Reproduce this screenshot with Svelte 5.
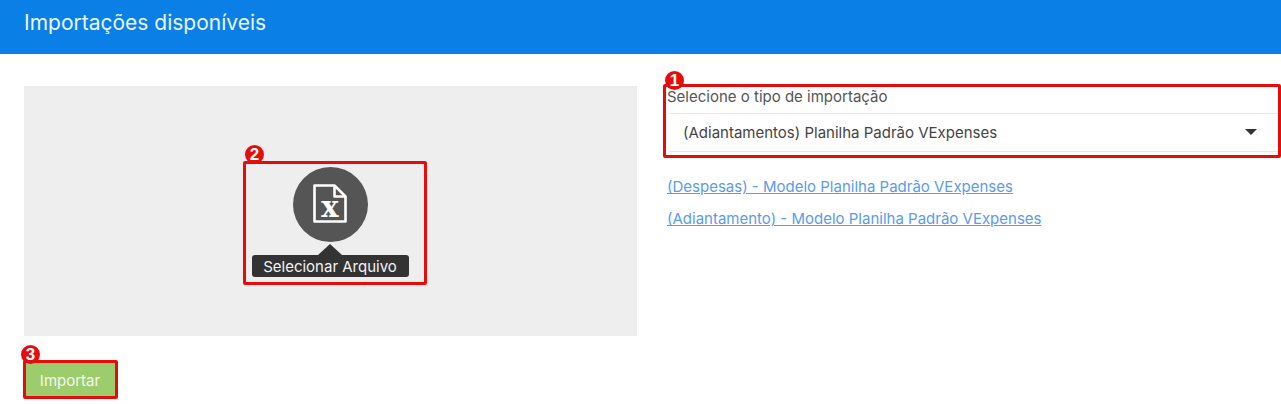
<script>
  const links = [
    '(Despesas) - Modelo Planilha Padrão VExpenses',
    '(Adiantamento) - Modelo Planilha Padrão VExpenses'
  ];
  const marks = [
    { n: 1, cls: 'm1' },
    { n: 2, cls: 'm2' },
    { n: 3, cls: 'm3' }
  ];
</script>

<div class="page">
  <header class="top"><h1>Importações disponíveis</h1></header>
  <main class="content">
    <section class="left">
      <div class="drop">
        <div class="circle">
          <svg class="fileicon" width="34" height="39" viewBox="0 0 34 39" fill="none" aria-hidden="true">
            <path d="M1.5 1.5H21.5L32.5 12.5V37.5H1.5Z" stroke="#fff" stroke-width="2.6" stroke-linejoin="round"/>
            <path d="M21.5 1.5V12.5H32.5" stroke="#fff" stroke-width="2.6" stroke-linejoin="round"/>
            <text x="17" y="33" text-anchor="middle" class="xl">x</text>
          </svg>
        </div>
        <div class="tip">Selecionar Arquivo</div>
      </div>
      <button class="go">Importar</button>
    </section>
    <section class="right">
      <div class="lab">Selecione o tipo de importação</div>
      <div class="select">
        <span>(Adiantamentos) Planilha Padrão VExpenses</span>
        <i class="caret"></i>
      </div>
      <div class="links">
        {#each links as l}
          <a href="#top">{l}</a>
        {/each}
      </div>
    </section>
  </main>

  <div class="box b1"></div>
  <div class="box b2"></div>
  <div class="box b3"></div>
  {#each marks as m}
    <div class="mark {m.cls}">{m.n}</div>
  {/each}
</div>

<style>
  :global(body) { margin: 0; background: #fff; }
  .page {
    position: relative;
    width: 1281px;
    height: 404px;
    overflow: hidden;
    font-family: Inter, "Liberation Sans", sans-serif;
    color: #444;
  }
  .top {
    height: 54px;
    box-sizing: border-box;
    background: #0a80e6;
    padding: 9px 24px 0;
  }
  h1 {
    margin: 0;
    font-size: 21px;
    line-height: 28px;
    font-weight: 400;
    color: #eaf4fd;
  }
  .content {
    display: flex;
    gap: 30px;
    padding: 32px 24px 0;
  }
  .left { width: 613px; flex: none; }
  .drop {
    height: 250px;
    background: #eee;
    display: flex;
    flex-direction: column;
    align-items: center;
    padding-top: 81px;
    box-sizing: border-box;
  }
  .circle {
    width: 75px;
    height: 75px;
    border-radius: 50%;
    background: #555;
    display: flex;
    align-items: center;
    justify-content: center;
    flex: none;
  }
  .fileicon { margin: -3px 0 0 -1px; }
  .xl {
    font-family: "DejaVu Serif", serif;
    font-weight: 700;
    font-size: 29px;
    fill: #fff;
  }
  .tip {
    position: relative;
    margin: 13px 1px 0 0;
    width: 157px;
    height: 22px;
    line-height: 23px;
    border-radius: 3px;
    background: #333;
    color: #f2f2f2;
    font-size: 15px;
    text-align: center;
    white-space: nowrap;
  }
  .tip::before {
    content: "";
    position: absolute;
    left: 66px;
    top: -11px;
    border: 12px solid transparent;
    border-top: 0;
    border-bottom: 11px solid #333;
  }
  .go {
    display: block;
    margin-top: 27px;
    width: 92px;
    height: 34px;
    border: 0;
    padding: 0;
    background: #9ccc6b;
    color: #f4f9ee;
    font: 400 15px Inter, "Liberation Sans", sans-serif;
  }
  .right { flex: 1; }
  .lab {
    padding-top: 2px;
    height: 27px;
    box-sizing: border-box;
    font-size: 15px;
    line-height: 18px;
    color: #555;
  }
  .select {
    margin-left: 2px;
    height: 39px;
    width: 610px;
    box-sizing: border-box;
    border-top: 1px solid #e8e8e8;
    border-bottom: 1px solid #e8e8e8;
    padding: 0 22px 0 14px;
    display: flex;
    align-items: center;
    justify-content: space-between;
    font-size: 15px;
    color: #444;
  }
  .caret {
    border: 6px solid transparent;
    border-bottom: 0;
    border-top: 6px solid #333;
    margin-top: -2px;
  }
  .links {
    display: flex;
    flex-direction: column;
    gap: 14px;
    margin-top: 26px;
  }
  .links a {
    font-size: 15px;
    line-height: 18px;
    color: #5b9bea;
    width: fit-content;
  }
  .box {
    position: absolute;
    border: 3px solid #e50c0c;
    border-radius: 2px;
    box-sizing: border-box;
    pointer-events: none;
  }
  .b1 { left: 663px; top: 84px; width: 618px; height: 74px; }
  .b2 { left: 243px; top: 161px; width: 184px; height: 124px; }
  .b3 { left: 23px; top: 360px; width: 95px; height: 39px; }
  .mark {
    position: absolute;
    width: 19px;
    height: 19px;
    border-radius: 50%;
    background: #e50c0c;
    color: #fff;
    font: 700 17px/19px "Liberation Sans", sans-serif;
    text-align: center;
  }
  .m1 { left: 665px; top: 71px; }
  .m2 { left: 245px; top: 145px; }
  .m3 { left: 21px; top: 345px; }
</style>
